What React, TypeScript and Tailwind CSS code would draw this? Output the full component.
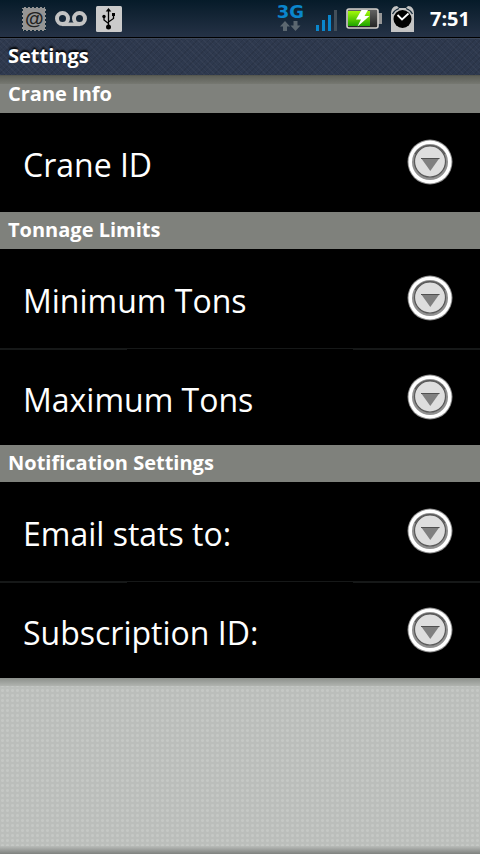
import React from "react";

function MailIcon() {
  return (
    <svg width="24" height="24" viewBox="0 0 24 24" role="img" aria-label="New mail">
      <rect width="24" height="24" fill="#949494" />
      <rect width="24" height="24" fill="none" stroke="#0f2635" strokeWidth="2" strokeDasharray="2 2" />
      <text x="12" y="18" textAnchor="middle" fontFamily="'Liberation Sans', sans-serif" fontStyle="italic" fontWeight="bold" fontSize="19" fill="#222">
        @
      </text>
    </svg>
  );
}

function VoicemailIcon() {
  return (
    <svg width="32" height="16" viewBox="0 0 32 16" fill="none" stroke="#c3c3c3" strokeWidth="4" role="img" aria-label="Voicemail">
      <circle cx="7.5" cy="7.5" r="5.5" />
      <circle cx="24.5" cy="7.5" r="5.5" />
      <path d="M7 13.3H25" strokeWidth="3.6" />
    </svg>
  );
}

function UsbIcon() {
  return (
    <svg width="26" height="26" viewBox="0 0 26 26" role="img" aria-label="USB connected">
      <rect width="26" height="26" rx="1.5" fill="#cbcbcb" />
      <g fill="none" stroke="#000" strokeWidth="1.3">
        <path d="M12.5 5V20M12.5 17.5L8 14V10M12.5 16L17.5 12.5V8" />
      </g>
      <path d="M12.5 2L15.3 5.5H9.7Z" />
      <circle cx="12.5" cy="21" r="2.5" />
      <circle cx="8" cy="10.5" r="1.7" />
      <rect x="16" y="7" width="3" height="3" />
    </svg>
  );
}

function DataArrows() {
  return (
    <svg width="22" height="12" viewBox="0 0 22 12" fill="#5b6770" aria-hidden="true">
      <path d="M6 1L11 6.5H8V11H4V6.5H1Z" />
      <path d="M16.5 11L11.5 5.5H14.5V1H18.5V5.5H21.5Z" />
    </svg>
  );
}

function SignalIcon() {
  return (
    <svg width="21" height="21" viewBox="0 0 21 21" fill="#0a86cc" role="img" aria-label="Signal strength">
      <rect x="0" y="15" width="3" height="6" />
      <rect x="6" y="10" width="3" height="11" />
      <rect x="12" y="5" width="3" height="16" />
      <rect x="18" y="0" width="3" height="21" fill="#434f5a" />
    </svg>
  );
}

function BatteryIcon() {
  return (
    <svg width="37" height="21" viewBox="0 0 37 21" role="img" aria-label="Battery charging">
      <defs>
        <linearGradient id="charge" x1="0" y1="0" x2="0" y2="1">
          <stop offset="0" stopColor="#a4fa08" />
          <stop offset="1" stopColor="#1ea500" />
        </linearGradient>
        <linearGradient id="empty" x1="0" y1="0" x2="0" y2="1">
          <stop offset="0" stopColor="#666" />
          <stop offset="1" stopColor="#222" />
        </linearGradient>
      </defs>
      <rect x="32" y="5" width="4" height="11" fill="#969696" />
      <rect x="1" y="1" width="31" height="19" rx="2" fill="url(#empty)" stroke="#d4d0cc" strokeWidth="1.6" />
      <rect x="2" y="3" width="22" height="15" fill="url(#charge)" />
      <path d="M15.5 2H22L18.5 8H23.5L11.5 18.5L15 11.5H10Z" fill="#fff" />
    </svg>
  );
}

function AlarmIcon() {
  return (
    <svg width="23" height="26" viewBox="0 0 23 26" role="img" aria-label="Alarm set">
      <path d="M0 8C0 3 2 0 6 0L8 2H15L17 0C21 0 23 3 23 8V26H0Z" fill="#c4c4c4" />
      <path d="M1.5 8C3 5 5 3.5 8 2.5M21.5 8C20 5 18 3.5 15 2.5" stroke="#172b3a" strokeWidth="1.2" fill="none" />
      <circle cx="11.5" cy="13" r="9" fill="#000" />
      <path d="M6.5 9L11 13.5L17.5 7.5" fill="none" stroke="#fff" strokeWidth="1.8" />
    </svg>
  );
}

function ExpandIcon() {
  return (
    <svg className="shrink-0" width="46" height="46" viewBox="0 0 46 46" aria-hidden="true">
      <circle cx="23" cy="23" r="22.5" fill="#8c8c8c" />
      <circle cx="23" cy="23" r="21.5" fill="#fff" />
      <circle cx="23" cy="23" r="18" fill="#909090" />
      <circle cx="23" cy="22.5" r="15.5" fill="#dedede" stroke="#5a5a5a" strokeWidth="1.2" />
      <path d="M8 15A17.500 17.500 0 0 1 38 15" fill="none" stroke="#555" strokeWidth="1.200" />
      <path d="M14 19H32.5L23.3 32Z" fill="#808080" />
      <path d="M14 19.5H32.5" stroke="#505050" />
    </svg>
  );
}

function StatusBar() {
  return (
    <div className="flex h-[38px] items-center border-b border-black bg-linear-to-b from-[#061b29] to-[#253246] pr-2.5 pl-[22px]">
      <div className="flex items-center gap-[9px]">
        <MailIcon />
        <VoicemailIcon />
        <UsbIcon />
      </div>
      <div className="ml-auto flex items-center">
        <div className="mr-3 flex flex-col items-center gap-0.5">
          <span className="font-['DejaVu_Sans',sans-serif] text-lg leading-3 font-bold text-[#0a86cc]">3G</span>
          <DataArrows />
        </div>
        <div className="pt-1">
          <SignalIcon />
        </div>
        <div className="mr-2 ml-[9px]">
          <BatteryIcon />
        </div>
        <AlarmIcon />
        <time className="ml-4 text-xl leading-7 font-bold">7:51</time>
      </div>
    </div>
  );
}

function SectionHeader({ title }: { title: string }) {
  return (
    <h2 className="flex h-[37px] items-center bg-[#7f817c] px-2 pb-0.5 text-xl font-bold">
      {title}
    </h2>
  );
}

function PreferenceRow({ label }: { label: string }) {
  return (
    <li className="group">
      <div className="flex h-0.5 items-end justify-center bg-[#161818] group-first:hidden">
        <div className="h-px w-[47%] bg-black" />
      </div>
      <button
        type="button"
        className="flex h-[95px] w-full items-center justify-between pr-[27px] pb-0.5 pl-[23px] text-left group-first:h-[99px]"
      >
        <span className="pt-1.5 text-[32px] leading-10">{label}</span>
        <ExpandIcon />
      </button>
    </li>
  );
}

const sections = [
  { title: "Crane Info", items: ["Crane ID"] },
  { title: "Tonnage Limits", items: ["Minimum Tons", "Maximum Tons"] },
  { title: "Notification Settings", items: ["Email stats to:", "Subscription ID:"] },
];

export default function App() {
  return (
    <div className="flex min-h-screen flex-col bg-black font-['Open_Sans','Noto_Sans',sans-serif] text-white">
      <StatusBar />
      <header className="flex h-[37px] items-center border-t border-[#3c475a] bg-[#2e394e] bg-[repeating-linear-gradient(45deg,#ffffff08_0_1px,transparent_1px_4px),repeating-linear-gradient(-45deg,#00000018_0_1px,transparent_1px_4px)] px-2 pb-0.5">
        <h1 className="text-xl font-bold text-shadow-[0_-2px_2px_#000]">Settings</h1>
      </header>
      <main>
        <div className="h-px bg-[#55574f]" />
        {sections.map((section, index) => (
          <section key={section.title}>
            <div className={index === 0 ? "-mb-2 h-2 bg-linear-to-b from-[#55574f] to-[#74766f] relative z-10 opacity-80" : "hidden"} />
            <SectionHeader title={section.title} />
            <ul>
              {section.items.map((label) => (
                <PreferenceRow key={label} label={label} />
              ))}
            </ul>
          </section>
        ))}
      </main>
      <div className="flex grow flex-col justify-between bg-[#bbbebb] bg-[radial-gradient(circle,#c5c8c5_1px,transparent_2px)] bg-size-[5px_5px]">
        <div className="h-2 bg-linear-to-b from-[#8c908b] to-[#b0b3af]" />
        <div className="h-2 bg-linear-to-b from-[#b9bcb9] to-[#7f827f]" />
      </div>
    </div>
  );
}
